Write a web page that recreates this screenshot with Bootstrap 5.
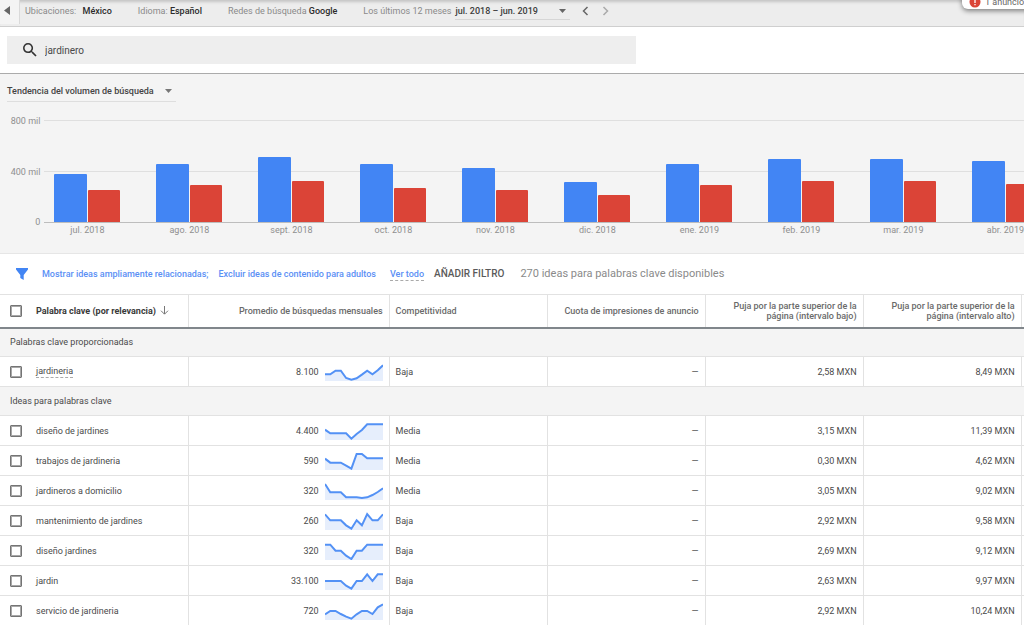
<!DOCTYPE html>
<html lang="es">
<head>
<meta charset="utf-8">
<meta name="viewport" content="width=device-width, initial-scale=1">
<title>Ideas para palabras clave</title>
<link href="https://cdn.jsdelivr.net/npm/bootstrap@5.3.0/dist/css/bootstrap.min.css" rel="stylesheet">
<style>
  body { font-family: Roboto, "Liberation Sans", sans-serif; font-size: 9px; line-height: 12px; color: #4a4a4a; overflow-x: hidden; }
  .muted { color: #8a8a8a; }
  .strong { color: #2b2b2b; font-weight: 500; }
  .plain-btn { background: none; border: 0; padding: 0; color: inherit; line-height: inherit; white-space: nowrap; }

  .topbar { height: 27px; background: #ededed; border-bottom: 1px solid #cfcfcf; box-shadow: inset 0 4px 3px -2px #c4c4c4; overflow: hidden; }
  .collapse-btn { width: 20px; background: #f4f4f4; border: 0; border-right: 1px solid #dadada; padding: 0 0 4px 4px; margin-bottom: 2px; }
  .settings { padding: 0 0 4px 5px; gap: 26px; }
  .period { border-bottom: 1px solid #d6d6d6; width: 115px; height: 17px; color: #3c3c3c; font-weight: 500; }
  .steps { gap: 13px; margin-left: 12px; }
  .alert-pill { position: absolute; top: -10px; right: -16px; width: 78px; height: 19px; padding: 0 0 1px 7px; background: #fff; border-radius: 6px; box-shadow: 0 2px 5px #0007; color: #666; white-space: nowrap; }

  .searchbar { padding: 9px 7px; border-bottom: 1px solid #ababab; box-shadow: 0 1px 2px #0004; }
  .search-field { width: 62.3%; height: 28px; background: #eee; padding-left: 16px; gap: 8px; }
  .search-field input { font-size: 10px; color: #4a4a4a; background: none; border: 0; outline: 0; padding: 1px 0 0; }

  .trend { background: #f4f4f4; padding: 7px 0 13px; border-bottom: 1px solid #e6e6e6; }
  .trend-menu { margin-left: 7px; width: 169px; height: 21px; padding-right: 4px; border-bottom: 1px solid #dedede; color: #444; font-weight: 500; }
  .chart { margin-top: 18px; color: #8f8f8f; }
  .axis { width: 45px; height: 103px; padding-right: 4px; }
  .axis span { line-height: 2px; }
  .plot { position: relative; height: 120px; overflow: hidden; padding-left: 10px; gap: 36px; }
  .rule { position: absolute; left: 0; right: 0; border-top: 1px solid #dfdfdf; }
  .rule-top { top: 0; }
  .rule-mid { top: 51px; }
  .rule-base { top: 102px; border-color: #bdbdbd; }
  .month { position: relative; width: 66px; flex: none; }
  .bars { height: 102px; gap: 1px; }
  .bar { flex: 1; border-radius: 1px 1px 0 0; }
  .bar-total { background: #4285f4; }
  .bar-mobile { background: #db4437; }
  .month-name { margin-top: 2px; }

  .filters { height: 40px; padding-left: 16px; white-space: nowrap; }
  .filters a { color: #5b8ff5; text-decoration: none; font-weight: 500; }
  .filters .funnel { margin-right: 14px; }
  .filters .first-filter { margin-right: 10px; }
  .filters .second-filter { margin-right: 14px; }
  .filters a.dashed, .dashed { border-bottom: 1px dashed #aaa; }
  .add-filter { font-size: 10px; font-weight: 500; color: #5a5a5a; margin: 0 16px 0 10px; }
  .count { font-size: 11px; }

  .ideas { table-layout: fixed; --bs-table-bg: transparent; color: inherit; margin: 0; border-top: 1px solid #e2e2e2; }
  .ideas .c-key { width: 18.4%; }
  .ideas .c-avg { width: 19.6%; }
  .ideas .c-std { width: 15.43%; }
  .ideas > * > tr > * { color: inherit; padding: 0 6px; vertical-align: middle; border: 0 solid #e2e2e2; border-width: 0 1px 1px 0; }
  .ideas > * > tr > .tail { padding: 0; border-right: 0; }
  .ideas > thead > tr > * { height: 33px; font-weight: 500; line-height: 10px; color: #6a6a6a; border-bottom: 2px solid #80868b; }
  .ideas > thead > tr > .first { color: #3a3a3a; font-weight: 700; }
  .ideas > tbody > tr > td { height: 30px; }
  .ideas > tbody > tr > .first, .ideas > thead > tr > .first { padding-left: 10px; }
  .ideas > tbody > tr > .group { height: 29px; padding-left: 10px; background: #f4f4f4; font-weight: 400; border-right: 0; }
  .ideas .form-check-input { width: 12px; height: 12px; margin: 0 14px 0 0; border: 1px solid #747474; outline: 1px solid #a8a8a8; outline-offset: -2px; border-radius: 1px; flex: none; }
  .spark { width: 58px; height: 19px; margin-left: 6px; }
</style>
</head>
<body>
<header class="topbar d-flex align-items-stretch position-relative">
  <button class="collapse-btn d-flex align-items-center" type="button" aria-label="Mostrar menú">
    <svg width="6" height="9" viewBox="0 0 6 9"><path d="M6 0v9L0 4.500z" fill="#666"/></svg>
  </button>
  <div class="settings d-flex align-items-center muted text-nowrap">
    <span>Ubicaciones: <span class="strong ms-1">México</span></span>
    <span>Idioma: <span class="strong">Español</span></span>
    <span>Redes de búsqueda <span class="strong">Google</span></span>
    <div class="d-flex align-items-center">
      <span class="me-1">Los últimos 12 meses</span>
      <button class="plain-btn period d-flex align-items-center justify-content-between pe-1" type="button">jul. 2018 – jun. 2019
        <svg width="7" height="4" viewBox="0 0 7 4"><path d="M0 0h7L3.500 4z" fill="#666"/></svg>
      </button>
      <div class="steps d-flex">
        <button class="plain-btn d-flex" type="button" aria-label="Periodo anterior"><svg width="7" height="10" viewBox="0 0 7 10"><path d="M5.500 1L1.500 5l4 4" fill="none" stroke="#666" stroke-width="1.500"/></svg></button>
        <button class="plain-btn d-flex" type="button" aria-label="Periodo siguiente"><svg width="7" height="10" viewBox="0 0 7 10"><path d="M1.500 1l4 4-4 4" fill="none" stroke="#aaa" stroke-width="1.500"/></svg></button>
      </div>
    </div>
  </div>
  <div class="alert-pill d-flex align-items-end gap-1">
    <svg width="12" height="12" viewBox="0 0 12 12"><circle cx="6" cy="6" r="5.500" fill="#db4437"/><path d="M6 3v4M6 8v1.300" stroke="#fff" stroke-width="1.300"/></svg>
    1 anuncio
  </div>
</header>

<div class="searchbar">
  <label class="search-field d-flex align-items-center">
    <svg width="14" height="14" viewBox="3 3 18 18" aria-label="Buscar"><path fill="#333" d="M15.500 14h-.79l-.28-.27A6.470 6.470 0 0 0 16 9.500 6.500 6.500 0 1 0 9.500 16c1.610 0 3.090-.59 4.230-1.570l.27.28v.79l5 4.990L20.490 19l-4.990-5zm-6 0C7.010 14 5 11.990 5 9.500S7.010 5 9.500 5 14 7.010 14 9.500 11.990 14 9.500 14z"/></svg>
    <input class="flex-grow-1" type="text" value="jardinero" aria-label="Palabra clave">
  </label>
</div>

<section class="trend">
  <button class="plain-btn trend-menu d-flex align-items-center justify-content-between" type="button">Tendencia del volumen de búsqueda
    <svg width="7" height="4" viewBox="0 0 7 4"><path d="M0 0h7L3.500 4z" fill="#777"/></svg>
  </button>
  <div class="chart d-flex">
    <div class="axis d-flex flex-column justify-content-between align-items-end"><span>800 mil</span><span>400 mil</span><span>0</span></div>
    <div class="plot d-flex flex-grow-1" id="plot">
      <div class="rule rule-top"></div><div class="rule rule-mid"></div>
    </div>
  </div>
</section>

<div class="filters d-flex align-items-center">
  <svg class="funnel" width="12" height="12" viewBox="0 0 12 12"><path d="M0 0h12v1.500L7.700 7v5L4.300 10V7L0 1.500z" fill="#4285f4"/></svg>
  <a class="first-filter" href="#">Mostrar ideas ampliamente relacionadas;</a>
  <a class="second-filter" href="#">Excluir ideas de contenido para adultos</a>
  <a class="dashed" href="#">Ver todo</a>
  <button class="plain-btn add-filter" type="button">AÑADIR FILTRO</button>
  <span class="muted count">270 ideas para palabras clave disponibles</span>
</div>

<table class="table ideas w-100">
  <colgroup><col class="c-key"><col class="c-avg"><col class="c-std"><col class="c-std"><col class="c-std"><col class="c-std"><col></colgroup>
  <thead>
    <tr>
      <th class="first" scope="col"><div class="d-flex align-items-center">
        <input class="form-check-input" type="checkbox" aria-label="Seleccionar todo">Palabra clave (por relevancia)
        <svg class="ms-1" width="9" height="9" viewBox="0 0 9 9"><path d="M4.500 0v8M1 4.700l3.500 3.500L8 4.700" fill="none" stroke="#777"/></svg></div></th>
      <th class="text-end" scope="col">Promedio de búsquedas mensuales</th>
      <th scope="col">Competitividad</th>
      <th class="text-end" scope="col">Cuota de impresiones de anuncio</th>
      <th class="text-end" scope="col">Puja por la parte superior de la<br>página (intervalo bajo)</th>
      <th class="text-end" scope="col">Puja por la parte superior de la<br>página (intervalo alto)</th>
      <td class="tail"></td>
    </tr>
  </thead>
  <tbody id="rows"></tbody>
</table>

<script src="https://cdn.jsdelivr.net/npm/bootstrap@5.3.0/dist/js/bootstrap.bundle.min.js"></script>
<script>
  // Monthly volume in thousands: total and mobile
  const months = [
    ['jul. 2018', 373, 248], ['ago. 2018', 454, 290], ['sept. 2018', 510, 318], ['oct. 2018', 458, 270],
    ['nov. 2018', 424, 254], ['dic. 2018', 312, 210], ['ene. 2019', 454, 294], ['feb. 2019', 498, 318],
    ['mar. 2019', 498, 318], ['abr. 2019', 476, 300]
  ];
  const plot = document.getElementById('plot');
  plot.insertAdjacentHTML('beforeend', months.map(([name, total, mobile]) => `
    <div class="month"><div class="bars d-flex align-items-end">
      <div class="bar bar-total" style="height:${total / 8}%"></div>
      <div class="bar bar-mobile" style="height:${mobile / 8}%"></div>
    </div><div class="month-name text-center">${name}</div></div>`).join('') + '<div class="rule rule-base"></div>');

  const rows = [
    ['Palabras clave proporcionadas'],
    ['jardineria', '8.100', 'Baja', '2,58', '8,49', [20,20,31,31,9,4,8,19,31,20,32,47]],
    ['Ideas para palabras clave'],
    ['diseño de jardines', '4.400', 'Media', '3,15', '11,39', [31,20,20,20,20,4,18,30,47,47,47,47]],
    ['trabajos de jardineria', '590', 'Media', '0,30', '4,62', [34,22,22,22,13,4,48,48,35,35,35,35]],
    ['jardineros a domicilio', '320', 'Media', '3,05', '9,02', [48,23,23,23,8,8,8,6,8,15,24,35]],
    ['mantenimiento de jardines', '260', 'Baja', '2,92', '9,58', [47,29,29,29,14,4,29,14,48,29,29,47]],
    ['diseño jardines', '320', 'Baja', '2,69', '9,12', [46,46,28,28,13,3,28,28,46,46,46,46]],
    ['jardin', '33.100', 'Baja', '2,63', '9,97', [27,27,27,27,13,4,27,27,47,27,47,47]],
    ['servicio de jardineria', '720', 'Baja', '2,92', '10,24', [17,27,27,18,10,4,17,27,27,18,38,47]]
  ];
  const spark = values => {
    const line = values.map((v, i) => `${(i * 174 / 11).toFixed(1)},${57 - v}`).join(' ');
    return `<svg class="spark" viewBox="0 0 174 57" aria-hidden="true"><polygon points="0,57 ${line} 174,57" fill="#e6eefc"/><polyline points="${line}" fill="none" stroke="#5391f5" stroke-width="6"/></svg>`;
  };
  document.getElementById('rows').innerHTML = rows.map((r, i) => r.length === 1
    ? `<tr><th class="group" colspan="7" scope="colgroup">${r[0]}</th></tr>`
    : `<tr><td class="first"><div class="d-flex align-items-center"><input class="form-check-input" type="checkbox" id="k${i}"><label for="k${i}" class="${i === 1 ? 'dashed' : ''}">${r[0]}</label></div></td>
       <td><div class="d-flex align-items-center justify-content-end">${r[1]}${spark(r[5])}</div></td>
       <td>${r[2]}</td><td class="text-end">—</td><td class="text-end">${r[3]} MXN</td><td class="text-end">${r[4]} MXN</td><td class="tail"></td></tr>`).join('');
</script>
</body>
</html>
